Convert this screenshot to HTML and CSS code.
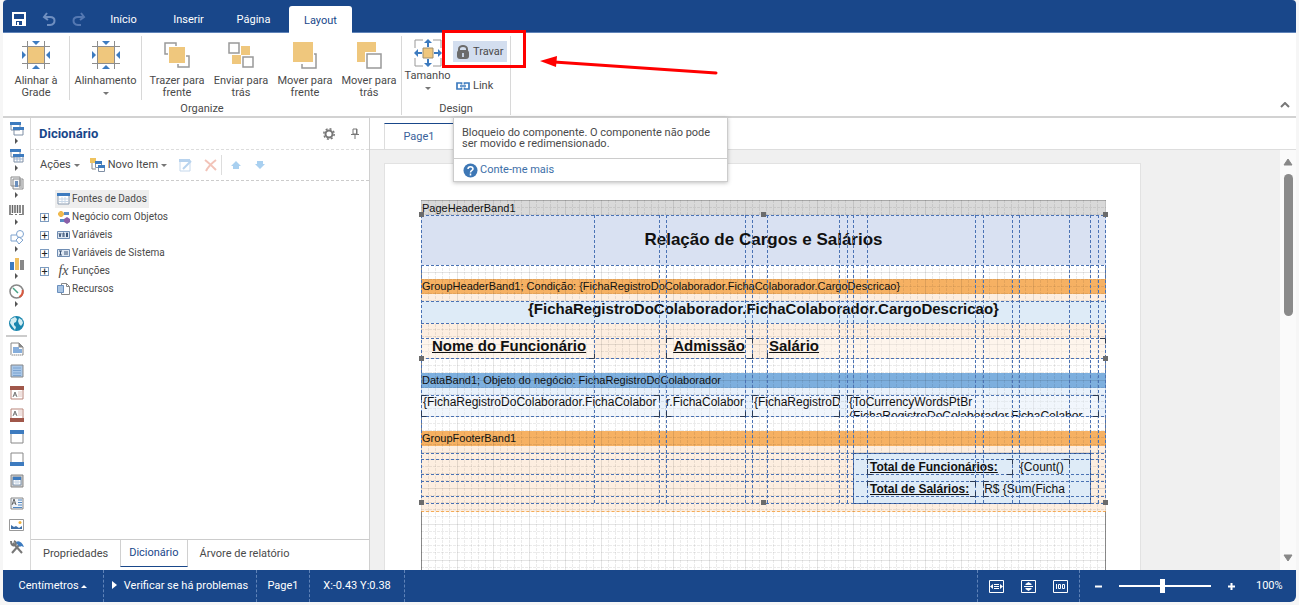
FILE: index.html
```html
<!DOCTYPE html>
<html lang="pt-br">
<head>
    <meta charset="UTF-8" />
    <title>Designer de Relatórios</title>
    <link rel="stylesheet" href="styles.css">
</head>
<body>
<div class="app">

    <!-- barra superior -->
    <header class="topbar">
        <button class="quick" aria-label="Salvar"><svg width="14" height="14" viewBox="0 0 14 14"><path d="M1 1h12v12H1z" fill="none" stroke="#fff" stroke-width="2"/><path d="M1 7h12v6H1z" fill="#fff"/><path d="M4 9h6v4H4z" fill="#19478a"/><path d="M5 10h2v3H5z" fill="#fff"/></svg></button>
        <button class="quick off" aria-label="Desfazer"><svg width="14" height="14" viewBox="0 0 14 14"><path d="M5 1L2 5l4 3M2 5h6c6 0 6 7 0 8H5" fill="none" stroke="#6f8fc0" stroke-width="2"/></svg></button>
        <button class="quick off last" aria-label="Refazer"><svg width="14" height="14" viewBox="0 0 14 14"><path d="M9 1l3 4-4 3M12 5H6c-6 0-6 7 0 8h3" fill="none" stroke="#5478b2" stroke-width="2"/></svg></button>
        <nav class="menu">
            <button>Início</button>
            <button>Inserir</button>
            <button>Página</button>
            <button class="active">Layout</button>
        </nav>
    </header>

    <!-- ribbon -->
    <div class="ribbon">
        <section class="group">
            <div class="tools">
                <button class="tool w-first">
                    <svg width="28" height="28" viewBox="0 0 28 28"><use href="#ic-align"/></svg>
                    <span>Alinhar à<br>Grade</span>
                </button>
                <button class="tool w-align">
                    <svg width="28" height="28" viewBox="0 0 28 28"><use href="#ic-align"/></svg>
                    <span>Alinhamento</span><i class="caret"></i>
                </button>
                <button class="tool">
                    <svg width="28" height="28" viewBox="0 0 28 28"><path d="M2 2h11v11H2zM15 15h11v11H15z" fill="#fff" stroke="#999" stroke-width="1.500"/><path d="M5 5h18v18H5z" fill="#fff"/><path d="M6 6h16v16H6z" fill="#efc77d"/></svg>
                    <span>Trazer para<br>frente</span>
                </button>
                <button class="tool">
                    <svg width="28" height="28" viewBox="0 0 28 28"><path d="M5 5h18v18H5z" fill="#efc77d"/><path d="M1 1h13v13H1zM14 14h13v13H14z" fill="#fff"/><path d="M2 2h10v10H2zM16 16h10v10H16z" fill="#fff" stroke="#999" stroke-width="1.500"/></svg>
                    <span>Enviar para<br>trás</span>
                </button>
                <button class="tool">
                    <svg width="28" height="28" viewBox="0 0 28 28"><path d="M11 13h14v14H11z" fill="#fff" stroke="#999" stroke-width="1.500"/><path d="M0 0h23v23H0z" fill="#fff"/><path d="M2 1h20v20H2z" fill="#efc77d"/></svg>
                    <span>Mover para<br>frente</span>
                </button>
                <button class="tool">
                    <svg width="28" height="28" viewBox="0 0 28 28"><path d="M2 1h19v20H2z" fill="#efc77d"/><path d="M10 11h18v17H10z" fill="#fff"/><path d="M12 13h14v14H12z" fill="#fff" stroke="#999" stroke-width="1.500"/></svg>
                    <span>Mover para<br>trás</span>
                </button>
            </div>
            <h2>Organize</h2>
        </section>
        <section class="group design">
            <div class="tools">
                <button class="tool w-size">
                    <svg width="28" height="28" viewBox="0 0 28 28"><path d="M1 9V1h8M19 1h8v8M27 19v8h-8M9 27H1v-8" fill="none" stroke="#999"/><path d="M9 9h10v10H9z" fill="#efc77d" stroke="#a09070"/><path d="M13 8V4h-3l4-4 4 4h-3v4zM13 20v4h-3l4 4 4-4h-3v-4zM8 13H4v-3l-4 4 4 4v-3h4zM20 13h4v-3l4 4-4 4v-3h-4z" fill="#3d7bbf"/></svg>
                    <span>Tamanho</span><i class="caret"></i>
                </button>
                <div class="small-tools">
                    <button class="small-tool on" aria-describedby="tip">
                        <svg width="14" height="14" viewBox="0 0 14 14"><path d="M3 7V4a4 3 0 0 1 8 0v3" fill="none" stroke="#6b6b6b" stroke-width="2"/><rect x="1" y="5" width="12" height="9" rx="3" fill="#6b6b6b"/><path d="M6 8h2v4H6z" fill="#c5d0e0"/></svg>Travar</button>
                    <button class="small-tool">
                        <svg width="14" height="14" viewBox="0 0 14 14"><path d="M5.500 5.500V4H1v6h4.500V8.500M8.500 5.500V4H13v6H8.500V8.500M4 7h6" fill="none" stroke="#3d7bbf" stroke-width="1.700"/></svg>Link</button>
                    <div class="marker"></div>
                    <svg class="arrow" width="180" height="24" viewBox="0 0 180 24"><path d="M14 6L176 17" stroke="#f00" stroke-width="3" stroke-linecap="round"/><path d="M0 5L17 0L16 11z" fill="#f00"/></svg>
                    <div class="tooltip" id="tip" role="tooltip">
                        <p>Bloqueio do componente. O componente não pode ser movido e redimensionado.</p>
                        <a href="#"><svg width="15" height="15" viewBox="0 0 15 15"><circle cx="7.500" cy="7.500" r="7" fill="#3d77b5"/><path d="M5 6c0-3 5-3 5 0 0 1.500-2.500 1.500-2.500 3.500M7.500 10.500v2" fill="none" stroke="#fff" stroke-width="1.500"/></svg>Conte-me mais</a>
                    </div>
                </div>
            </div>
            <h2>Design</h2>
        </section>
        <button class="collapse" aria-label="Recolher"><svg width="10" height="6" viewBox="0 0 10 6"><path d="M1 5l4-4 4 4" fill="none" stroke="#777" stroke-width="2"/></svg></button>
    </div>

    <div class="workspace">
        <!-- caixa de ferramentas -->
        <aside class="toolbox">
            <button class="more" aria-label="Bandas"><svg width="14" height="14" viewBox="0 0 14 14"><path d="M1 1h9v7H1zM4 6h9v7H4z" fill="#fff" stroke="#7f8fa5"/><path d="M0 0h11v3H0zM3 5h11v3H3z" fill="#3d7bbf"/></svg></button>
            <button class="more" aria-label="Bandas cruzadas"><svg width="14" height="14" viewBox="0 0 14 14"><path d="M1 1h9v7H1zM4 6h9v7H4z" fill="#fff" stroke="#7f8fa5"/><path d="M0 0h11v3H0zM3 5h11v3H3z" fill="#3d7bbf"/><path d="M4 10h9M7 8v5M10 8v5" stroke="#9db3cf"/></svg></button>
            <button class="more" aria-label="Componentes"><svg width="14" height="14" viewBox="0 0 14 14"><path d="M1 1h9v9H1zM3 3h10v10H3z" fill="#f4f6f8" stroke="#8a8a8a"/><path d="M5 5h3v6H5z" fill="#6a8fbd"/><path d="M9 5h3M9 7h3M9 9h3M9 11h3" stroke="#888"/></svg></button>
            <button class="more" aria-label="Códigos de barras"><svg width="15" height="14" viewBox="0 0 15 14"><path d="M1 2v10M3.500 2v8M6 2v8M8.500 2v8M11 2v8M14 2v10" stroke="#666" stroke-width="1.500"/><path d="M2 11.500h2M6 11.500h2M10 11.500h3" stroke="#777"/></svg></button>
            <button class="more" aria-label="Formas"><svg width="14" height="14" viewBox="0 0 14 14"><path d="M1 5h7v6H1z" fill="#fff" stroke="#7ea3cf"/><circle cx="10" cy="4" r="3.500" fill="#fff" stroke="#7ea3cf"/><path d="M9 7l4 3-4 4-3-4z" fill="#fff" stroke="#7ea3cf"/></svg></button>
            <button class="more" aria-label="Gráfico"><svg width="14" height="14" viewBox="0 0 14 14"><path d="M0 5h4v8H0z" fill="#3d7bbf"/><path d="M5 1h4v12H5z" fill="#efbf5f"/><path d="M10 3h4v10h-4z" fill="#888"/></svg></button>
            <button class="more" aria-label="Medidor"><svg width="15" height="15" viewBox="0 0 15 15"><circle cx="7.500" cy="7.500" r="6.500" fill="#fff" stroke="#888" stroke-width="1.500"/><path d="M13.500 6a6.500 6.500 0 0 1-3 7" fill="none" stroke="#d9593f" stroke-width="2"/><path d="M4 4l5 5" stroke="#47a387" stroke-width="1.500"/></svg></button>
            <button class="globe" aria-label="Mapa"><svg width="15" height="15" viewBox="0 0 15 15"><circle cx="7.500" cy="7.500" r="7.500" fill="#1a86ae"/><path d="M2 3l4-2 2 2-1 3-2 1v2l2 2-1 3-3-4-2-3zM10 2l3 2 1 3-2 3-2-2-1-3z" fill="#d4edf2"/></svg></button>
            <hr>
            <button aria-label="Título do relatório"><svg width="14" height="14" viewBox="0 0 14 14"><path d="M1 1h8l4 4v8H1z" fill="#fff" stroke="#888"/><path d="M9 1v4h4" fill="#888" stroke="#888"/><path d="M3 5h6v2h3v4H3z" fill="#86aedc"/><path d="M1 13h12" stroke="#fff" stroke-dasharray="1 1"/></svg></button>
            <button aria-label="Dados"><svg width="14" height="14" viewBox="0 0 14 14"><path d="M1 1h12v12H1z" fill="#a9c7e8" stroke="#888"/><path d="M3 4h8M3 6.500h8M3 9h8M3 11.500h8" stroke="#7ba3d0"/></svg></button>
            <button aria-label="Cabeçalho do grupo"><svg width="14" height="14" viewBox="0 0 14 14"><path d="M1 1h12v12H1z" fill="#fff" stroke="#b9857b"/><path d="M0 0h14v4H0z" fill="#a0574a"/><path d="M3 11l2-5 2 5M4 9h2" fill="none" stroke="#777"/><path d="M8 6h4M8 8h4M8 10h4" stroke="#e0c4be"/></svg></button>
            <button aria-label="Rodapé do grupo"><svg width="14" height="14" viewBox="0 0 14 14"><path d="M1 1h12v12H1z" fill="#fff" stroke="#b9857b"/><path d="M0 10h14v4H0z" fill="#a0574a"/><path d="M3 8l2-5 2 5M4 6h2" fill="none" stroke="#777"/><path d="M8 3h4M8 5h4M8 7h4" stroke="#e0c4be"/></svg></button>
            <button aria-label="Cabeçalho"><svg width="14" height="14" viewBox="0 0 14 14"><path d="M1 1h12v12H1z" fill="#fff" stroke="#888"/><path d="M0 0h14v4H0z" fill="#3d7bbf"/></svg></button>
            <button aria-label="Rodapé"><svg width="14" height="14" viewBox="0 0 14 14"><path d="M1 1h12v12H1z" fill="#fff" stroke="#888"/><path d="M0 10h14v4H0z" fill="#3d7bbf"/></svg></button>
            <button aria-label="Painel"><svg width="14" height="14" viewBox="0 0 14 14"><path d="M1 1h12v12H1z" fill="#ccc" stroke="#888"/><path d="M3 3h8v8H3z" fill="#fff" stroke="#7d93ad"/><path d="M3 3h8v3H3z" fill="#3d7bbf"/><path d="M4 8h6M6 6v5M8 6v5" stroke="#c6d5e6"/></svg></button>
            <button aria-label="Texto"><svg width="14" height="14" viewBox="0 0 14 14"><path d="M1 2h12v11H1z" fill="#f0f4f9" stroke="#888"/><path d="M2 9l2-6 2 6M3 7h2" fill="none" stroke="#666"/><path d="M8 4h4M8 6.500h4M8 9h4M3 11.500h9" stroke="#4f86c2"/></svg></button>
            <button aria-label="Imagem"><svg width="15" height="14" viewBox="0 0 15 14"><path d="M.5 1.500h14v11H.5z" fill="#fff" stroke="#999"/><path d="M2 11V7l3 2 2-1 3 2 3-2v3z" fill="#3d6fa8"/><circle cx="11" cy="4.500" r="1.500" fill="#efb23f"/></svg></button>
            <button aria-label="Configurar"><svg width="14" height="14" viewBox="0 0 14 14"><path d="M3 3l9 10" stroke="#777" stroke-width="2"/><path d="M1 1c0 4 2 5 4 4s1-3-1-4" fill="none" stroke="#777" stroke-width="2"/><path d="M2 13l7-8" stroke="#777" stroke-width="2"/><path d="M6 2c3-2 6 0 8 5l-3-1-1 1-3-3z" fill="#3d7bbf"/></svg></button>
        </aside>

        <!-- dicionário -->
        <section class="panel">
            <div class="panel-head">
                <h1>Dicionário</h1>
                <button aria-label="Opções"><svg width="12" height="12" viewBox="0 0 12 12"><circle cx="6" cy="6" r="3.500" fill="none" stroke="#777" stroke-width="2"/><circle cx="6" cy="6" r="5.200" fill="none" stroke="#777" stroke-width="1.500" stroke-dasharray="2 2.080"/></svg></button>
                <button aria-label="Fixar"><svg width="8" height="12" viewBox="0 0 8 12"><path d="M2 1h4v5H2z" fill="#fff" stroke="#777"/><path d="M5.500 1v5M0 6.500h8M4 7v4" stroke="#777"/></svg></button>
            </div>
            <div class="panel-tools">
                <button class="actions">Ações <i class="caret"></i></button>
                <button class="new-item"><svg width="15" height="14" viewBox="0 0 15 14"><path d="M2 3v8h4" fill="none" stroke="#888"/><path d="M0 0h6v5H0z" fill="#efc35f"/><path d="M5.500 4.500h6v5h-6zM8.500 7.500h6v6h-6z" fill="#fff" stroke="#7f8fa5"/><path d="M5 3h7v3H5zM8 7h7v3H8z" fill="#3d7bbf"/></svg>Novo Item <i class="caret"></i></button>
                <button aria-label="Editar" disabled><svg width="13" height="13" viewBox="0 0 13 13"><path d="M1 1h10v11H1z" fill="#fff" stroke="#c5d8ec"/><path d="M0 0h11v3H0z" fill="#b8d3ee"/><path d="M4 10l8-8" stroke="#b8d3ee" stroke-width="2"/></svg></button>
                <button class="del" aria-label="Excluir" disabled><svg width="13" height="13" viewBox="0 0 13 13"><path d="M1 1c4 3 8 7 11 10M12 1C8 4 4 8 2 12" fill="none" stroke="#f2c3b8" stroke-width="2"/></svg></button>
                <button class="up" aria-label="Subir" disabled><svg width="10" height="8" viewBox="0 0 10 8"><path d="M5 0l5 5H8v3H2V5H0z" fill="#a9d0f0"/></svg></button>
                <button class="down" aria-label="Descer" disabled><svg width="10" height="8" viewBox="0 0 10 8"><path d="M5 8l5-5H8V0H2v3H0z" fill="#a9d0f0"/></svg></button>
            </div>
            <ul class="tree">
                <li><span class="leaf"></span><button class="selected"><svg width="13" height="14" viewBox="0 0 13 14"><path d="M1 2h11v10H1z" fill="#fff" stroke="#8a9bb0"/><path d="M0 1h13v3H0z" fill="#3d7bbf"/><path d="M2 7h9M2 9.500h9M5 5v6M8 5v6" stroke="#c9d8e8"/></svg>Fontes de Dados</button></li>
                <li><button class="exp" aria-label="Expandir">+</button><button><svg width="13" height="14" viewBox="0 0 13 14"><path d="M4 1v6M1 4h6M2 2l4 4M6 2L2 6" stroke="#efb94f" stroke-width="2"/><path d="M7 2h5v3H7zM3 9h4v3H3z" fill="#5a8cc4"/><path d="M7 9l3-2 3 2v3l-3 2-3-2z" fill="#8a5fa8"/></svg>Negócio com Objetos</button></li>
                <li><button class="exp" aria-label="Expandir">+</button><button><svg width="13" height="14" viewBox="0 0 13 14"><path d="M.5 3.500h12v7H.5z" fill="#dfe8f3" stroke="#6f8db3"/><path d="M2 5l1 4 1-4M6 9V5h1v4M9.500 9V5h1v4" fill="none" stroke="#3b5578"/></svg>Variáveis</button></li>
                <li><button class="exp" aria-label="Expandir">+</button><button><svg width="13" height="14" viewBox="0 0 13 14"><path d="M.5 3.500h12v7H.5z" fill="#dfe8f3" stroke="#6f8db3"/><path d="M2 5h3M3.500 5v4M2 9h3M7 6h4M7 8h4" stroke="#3b5578"/></svg>Variáveis de Sistema</button></li>
                <li><button class="exp" aria-label="Expandir">+</button><button><em class="fx">fx</em>Funções</button></li>
                <li><span class="leaf"></span><button><svg width="13" height="14" viewBox="0 0 13 14"><path d="M4.500 1.500h5l3 3v8h-8z" fill="#fff" stroke="#888"/><path d="M9.500 1.500v3h3" fill="none" stroke="#888"/><path d="M.5 3.500h6v7h-6z" fill="#a9c4e2" stroke="#6a8fbd"/></svg>Recursos</button></li>
            </ul>
            <div class="panel-tabs">
                <button>Propriedades</button>
                <button class="active">Dicionário</button>
                <button>Árvore de relatório</button>
            </div>
        </section>

        <!-- área de desenho -->
        <main class="designer">
            <div class="page-tabs"><button>Page1</button></div>
            <div class="scroll-area">
                <div class="sheet">
                    <div class="report">
                        <div class="band page-header">
                            <div class="label">PageHeaderBand1</div>
                            <div class="body"><div class="title">Relação de Cargos e Salários</div></div>
                        </div>
                        <div class="band group-header">
                            <div class="label">GroupHeaderBand1; Condição: {FichaRegistroDoColaborador.FichaColaborador.CargoDescricao}</div>
                            <div class="body">
                                <div class="group-name">{FichaRegistroDoColaborador.FichaColaborador.CargoDescricao}</div>
                                <div class="columns">
                                    <div class="cell c-nome">Nome do Funcionário</div>
                                    <div class="cell c-adm">Admissão</div>
                                    <div class="cell c-sal">Salário</div>
                                </div>
                            </div>
                        </div>
                        <div class="band data">
                            <div class="label">DataBand1; Objeto do negócio: FichaRegistroDoColaborador</div>
                            <div class="body">
                                <div class="cell d-nome">{FichaRegistroDoColaborador.FichaColabor</div>
                                <div class="cell d-adm">r.FichaColabor</div>
                                <div class="cell d-sal">{FichaRegistroD</div>
                                <div class="cell d-ext">{ToCurrencyWordsPtBr<br>(FichaRegistroDoColaborador.FichaColabor</div>
                            </div>
                        </div>
                        <div class="band group-footer">
                            <div class="label">GroupFooterBand1</div>
                            <div class="body">
                                <div class="totals">
                                    <div class="total"><b>Total de Funcionários:</b><span class="count">{Count()</span></div>
                                    <div class="total"><b>Total de Salários:</b><span class="sum">R$ {Sum(Ficha</span></div>
                                </div>
                            </div>
                        </div>
                        <svg class="grid" aria-hidden="true">
                            <defs>
                                <pattern id="cells" width="36" height="36" patternUnits="userSpaceOnUse">
                                    <path d="M7.500 0v36M14.500 0v36M21.500 0v36M28.500 0v36M0 7.500h36M0 14.500h36M0 21.500h36M0 28.500h36" stroke="#000" stroke-opacity=".08" stroke-dasharray="3 1"/>
                                    <path d="M.5 0v36M0 .5h36" stroke="#000" stroke-opacity=".1"/>
                                </pattern>
                            </defs>
                            <rect width="100%" height="100%" fill="url(#cells)"/>
                        </svg>
                        <svg class="guides" width="691" height="312" viewBox="-3 0 691 312" aria-hidden="true">
                            <path class="guide" d="M.5 15v289M173.500 15v289M238.500 15v289M245.500 15v289M324.500 15v289M331.500 15v289M346.500 15v289M418.500 15v289M426.500 15v289M432.500 15v289M446.500 15v289M554.500 15v289M562.500 15v289M591.500 15v289M598.500 15v289M648.500 15v289M669.500 15v289M677.500 15v289M684.500 15v289"/>
                            <path class="guide" d="M0 15.500h685M0 65.500h685M0 101.500h685M0 123.500h685M0 138.500h685M0 158.500h685M0 195.500h685M0 216.500h685M0 253.500h685M0 259.500h685M0 274.500h685M0 281.500h685M0 296.500h685M0 303.500h685"/>
                            <path class="corner" d="M168 158.500h5.500v-5M245.500 143v-4.500h5M326 138.500h5.500v5M245.500 153v5.500h5M326 158.500h5.500v-5M346.500 153v5.500h5M679 138.500h5.500v5M.5 200v-4.500h5M.5 211v5.500h5M233 195.500h5.500v5M233 216.500h5.500v-5M245.500 211v5.500h5M319 216.500h5.500v-5M331.500 200v-4.500h5M331.500 211v5.500h5M413 195.500h5.500v5M413 216.500h5.500v-5M426.500 200v-4.500h5M672 195.500h5.500v5M672 216.500h5.500v-5M446.500 264v-4.500h5M446.500 269v5.500h5M586 259.500h5.500v5M586 274.500h5.500v-5M643 259.500h5.500v5M446.500 286v-4.500h5M549 281.500h5.500v5M549 296.500h5.500v-5M562.500 286v-4.500h5M562.500 291v5.500h5"/>
                            <path class="handle" d="M-2 12h5v5h-5zM340 12h5v5h-5zM682 12h5v5h-5zM-2 156h5v5h-5zM682 156h5v5h-5zM-2 300h5v5h-5zM340 300h5v5h-5zM682 300h5v5h-5z"/>
                        </svg>
                    </div>
                </div>
                <div class="scrollbar">
                    <svg width="10" height="8" viewBox="0 0 10 8"><path d="M5 1l4 6H1z" fill="#888" stroke="#888" stroke-linejoin="round"/></svg>
                    <div class="thumb"></div>
                    <svg class="end" width="10" height="8" viewBox="0 0 10 8"><path d="M5 7l4-6H1z" fill="#888" stroke="#888" stroke-linejoin="round"/></svg>
                </div>
            </div>
        </main>
    </div>

    <!-- barra de status -->
    <footer class="statusbar">
        <button class="s-units">Centímetros <i class="caret up"></i></button>
        <button class="s-check"><i class="play"></i>Verificar se há problemas</button>
        <span class="s-page">Page1</span>
        <span class="s-pos">X:-0.43 Y:0.38</span>
        <div class="views">
            <button aria-label="Largura da página"><svg width="15" height="13" viewBox="0 0 15 13"><path d="M.5.5h14v12H.5z" fill="none" stroke="#fff"/><path d="M5 4.500h5M5 6.500h5M5 8.500h5" stroke="#fff"/><path d="M4 4L1 6.500 4 9zM11 4l3 2.500L11 9z" fill="#fff"/></svg></button>
            <button aria-label="Página inteira"><svg width="15" height="13" viewBox="0 0 15 13"><path d="M.5.5h14v12H.5z" fill="none" stroke="#fff"/><path d="M3 6.500h9" stroke="#fff"/><path d="M7.500 2l3 2v1h-6V4zM7.500 11l3-2V8h-6v1z" fill="#fff"/></svg></button>
            <button aria-label="Zoom 100%"><svg width="15" height="13" viewBox="0 0 15 13"><path d="M.5.5h14v12H.5z" fill="none" stroke="#fff"/><path d="M3.500 4v5M5.500 4.500h2v4h-2zM9.500 4.500h2v4h-2z" fill="none" stroke="#fff"/></svg></button>
        </div>
        <div class="zoom">
            <button aria-label="Diminuir"><svg width="9" height="9" viewBox="0 0 9 9"><path d="M1 4.500h7" stroke="#fff" stroke-width="2"/></svg></button>
            <input type="range" min="0" max="100" value="47" aria-label="Zoom">
            <button aria-label="Aumentar"><svg width="9" height="9" viewBox="0 0 9 9"><path d="M1 4.500h7M4.500 1v7" stroke="#fff" stroke-width="2"/></svg></button>
            <output>100%</output>
        </div>
    </footer>
</div>

<svg class="sprites" aria-hidden="true">
    <symbol id="ic-align" viewBox="0 0 28 28">
        <path d="M6 6h16v16H6z" fill="#efc77d"/>
        <path d="M5.500 0v28M22.500 0v28M0 5.500h28M0 22.500h28" stroke="#8c8c8c"/>
        <path d="M10 0h8l-4 4zM10 28h8l-4-4zM0 10v8l4-4zM28 10v8l-4-4z" fill="#3d7bbf"/>
    </symbol>
</svg>
</body>
</html>
```
FILE: styles.css
```css
*{
    box-sizing:border-box;
}
body{
    margin:0;
    background:#f6f6f6;
    color:#4a4a4a;
    font-family:Roboto, sans-serif;
    font-size:11px;
    line-height:12px;
}
button{
    border:0;
    padding:0;
    background:none;
    color:inherit;
    font:inherit;
    white-space:nowrap;
}
h1, h2, p, ul{
    margin:0;
    padding:0;
}
svg{
    display:block;
    flex:none;
}
.sprites{
    position:absolute;
    width:0;
    height:0;
}
.app{
    display:flex;
    flex-direction:column;
    height:100vh;
    padding:0 3px 3px;
}
.caret{
    display:inline-block;
    border:3px solid transparent;
    border-top-color:#777;
    border-bottom:0;
}
.caret.up{
    border-top:0;
    border-bottom:3px solid #fff;
    vertical-align:middle;
}

/* barra superior */
.topbar{
    display:flex;
    align-items:center;
    height:33px;
    flex:none;
    padding:6px 0 0 9px;
    background:#19478a;
    border-bottom:1px solid #5f83b8;
    border-radius:4px 4px 0 0;
    color:#fff;
}
.quick{
    display:flex;
    width:30px;
}
.quick.last{
    width:19px;
}
.menu{
    display:flex;
    align-self:stretch;
}
.menu button{
    width:65px;
    padding-top:2px;
}
.menu .active{
    width:63px;
    margin:0 0 -1px 3px;
    background:#fff;
    border-radius:3px 3px 0 0;
    color:#19478a;
}

/* ribbon */
.ribbon{
    display:flex;
    flex:none;
    height:85px;
    background:#fff;
    border-bottom:2px solid #d2d2d2;
}
.group{
    position:relative;
    display:flex;
    flex-direction:column;
    margin:3px 0 1px;
    border-right:1px solid #d8d8d8;
}
.group h2{
    font-size:11px;
    font-weight:normal;
    text-align:center;
}
.tools{
    display:flex;
    height:67px;
    margin-bottom:2px;
}
.tool{
    display:flex;
    flex-direction:column;
    align-items:center;
    width:64px;
    height:64px;
    padding-top:5px;
}
.tool span{
    margin-top:6px;
}
.tool .caret{
    margin-top:5px;
}
.w-first{
    width:67px;
    border-right:1px solid #d8d8d8;
}
.w-align{
    width:72px;
    margin-right:3px;
    border-right:1px solid #d8d8d8;
}
.w-size{
    width:51px;
    padding-top:3px;
}
.w-size span{
    margin-top:3px;
}
.small-tools{
    position:relative;
    display:flex;
    flex-direction:column;
    gap:13px;
    width:57px;
    padding-top:5px;
}
.small-tool{
    display:flex;
    align-items:center;
    gap:3px;
    width:54px;
    height:21px;
    padding-left:3px;
}
.small-tool.on{
    background:#d3deef;
}
.marker{
    position:absolute;
    top:-6px;
    left:-11px;
    width:84px;
    height:38px;
    border:3px solid #f00;
}
.arrow{
    position:absolute;
    top:20px;
    left:87px;
}
.tooltip{
    position:absolute;
    z-index:5;
    top:81px;
    left:0;
    width:275px;
    background:#fff;
    border:1px solid #ccc;
    box-shadow:0 1px 4px rgba(0,0,0,.25);
}
.tooltip p{
    height:40px;
    padding:9px 8px 0;
    line-height:11px;
}
.tooltip a{
    display:flex;
    align-items:center;
    gap:2px;
    height:23px;
    padding-left:9px;
    border-top:1px solid #ccc;
    color:#3d6fa8;
    text-decoration:none;
}
.collapse{
    align-self:flex-end;
    margin:0 6px 8px auto;
}

.workspace{
    display:flex;
    flex:1;
    min-height:0;
    background:#fff;
}

/* caixa de ferramentas */
.toolbox{
    display:flex;
    flex-direction:column;
    align-items:center;
    flex:none;
    width:28px;
    padding-top:4px;
    border-right:1px solid #d8d8d8;
    overflow:hidden;
}
.toolbox button{
    display:flex;
    flex-direction:column;
    align-items:center;
    flex:none;
    height:22px;
}
.toolbox .more{
    height:27px;
}
.more::after{
    content:"";
    margin-top:2px;
    border:3px solid transparent;
    border-left-color:#555;
    border-right:0;
}
.toolbox .globe{
    margin-top:5px;
}
.toolbox hr{
    flex:none;
    width:21px;
    height:2px;
    margin:-3px 0 5px;
    border:0;
    background:#ccc;
}

/* dicionario */
.panel{
    display:flex;
    flex-direction:column;
    flex:none;
    width:339px;
    border-right:1px solid #d0d0d0;
}
.panel-head{
    display:flex;
    align-items:center;
    gap:16px;
    height:32px;
    padding:0 10px 0 8px;
    border-bottom:1px dashed #ddd;
}
.panel-head h1{
    margin-right:auto;
    color:#19478a;
    font-size:13px;
}
.panel-tools{
    display:flex;
    align-items:center;
    height:31px;
    padding-left:9px;
    border-bottom:1px dashed #ccc;
}
.panel-tools button{
    display:flex;
    align-items:center;
    gap:3px;
    margin-right:12px;
}
.panel-tools .actions{
    margin-right:10px;
}
.panel-tools .del{
    height:20px;
    margin-right:9px;
    padding-right:4px;
    border-right:1px solid #ddd;
}
.panel-tools .up{
    margin-right:14px;
}
.tree{
    flex:1;
    padding:9px 0 0 9px;
    font-size:10px;
    list-style:none;
}
.tree li{
    display:flex;
    align-items:center;
    height:18px;
}
.tree li button{
    display:flex;
    align-items:center;
    gap:2px;
    height:18px;
    padding:0 2px;
}
.tree li .selected{
    background:#eee;
}
.tree li .exp{
    justify-content:center;
    width:9px;
    height:9px;
    margin-right:6px;
    padding:0;
    border:1px solid #7d9cc0;
    color:#222;
    font-size:11px;
    line-height:7px;
}
.leaf{
    width:15px;
}
.fx{
    width:13px;
    font-family:"Liberation Serif", serif;
    font-size:14px;
}
.panel-tabs{
    display:flex;
    height:31px;
    padding-bottom:3px;
    border-top:1px solid #ccc;
}
.panel-tabs button{
    padding:0 12px;
}
.panel-tabs .active{
    padding:0 8px;
    border:solid #d0d0d0;
    border-width:0 1px 1px;
    border-bottom-color:#19478a;
    color:#19478a;
}

/* designer */
.designer{
    display:flex;
    flex-direction:column;
    flex:1;
    min-width:0;
}
.page-tabs{
    height:32px;
    padding:5px 0 0 14px;
    border-bottom:1px solid #ddd;
}
.page-tabs button{
    width:70px;
    height:26px;
    border:solid #ddd;
    border-width:1px;
    border-top-color:#19478a;
    border-bottom:0;
    color:#3a5f9a;
}
.scroll-area{
    display:flex;
    flex:1;
    min-height:0;
    padding-left:14px;
    background:#f0f0f0;
    overflow:hidden;
}
.sheet{
    flex:none;
    width:757px;
    margin-top:13px;
    padding:36px 35px 0 36px;
    background:#fff;
    border:1px solid #e2e2e2;
    border-bottom:0;
}
.scrollbar{
    display:flex;
    flex-direction:column;
    align-items:center;
    width:16px;
    margin-left:auto;
    padding:8px 0;
    background:#fafafa;
}
.thumb{
    width:9px;
    height:142px;
    margin-top:8px;
    border-radius:5px;
    background:#8a8a8a;
}
.scrollbar .end{
    margin-top:auto;
}

/* relatorio */
.report{
    position:relative;
    width:685px;
    height:100%;
    border:solid #999;
    border-width:0 1px;
    color:#111;
    font-family:"Liberation Sans", sans-serif;
    font-size:12px;
    line-height:14px;
}
.band{
    margin:0 -1px;
}
.band .label{
    height:15px;
    padding-left:1px;
    font-size:11px;
    line-height:15px;
}
.body{
    position:relative;
}
.cell{
    position:relative;
    z-index:2;
    overflow:hidden;
    white-space:nowrap;
}
.page-header .label{
    background:#d9d9d9;
    border-top:1px solid #bbb;
}
.page-header .body{
    height:64px;
}
.title{
    position:relative;
    z-index:2;
    height:50px;
    background:#d9e1f2;
    font-size:17px;
    font-weight:bold;
    line-height:50px;
    text-align:center;
}
.group-header .label, .group-footer .label{
    background:#f6b163;
}
.group-header .body{
    height:65px;
    margin-bottom:14px;
    padding-top:7px;
    background:#fdeee0;
}
.group-name{
    position:relative;
    z-index:2;
    height:22px;
    background:#deebf7;
    font-size:15px;
    font-weight:bold;
    line-height:16px;
    text-align:center;
}
.columns{
    display:flex;
    margin-top:15px;
}
.columns .cell{
    height:20px;
    background:rgba(255,255,255,.4);
    font-size:15px;
    font-weight:bold;
    line-height:16px;
    text-decoration:underline;
}
.c-nome{
    width:173px;
    padding-left:11px;
}
.c-adm{
    width:86px;
    margin:0 15px 0 72px;
    text-align:center;
}
.c-sal{
    flex:1;
    padding-left:2px;
}
.data .label{
    background:#7dafde;
}
.data .body{
    display:flex;
    height:28px;
    margin-bottom:15px;
    padding-top:7px;
    background:#e8f1fb;
}
.data .cell{
    height:21px;
    background:rgba(255,255,255,.4);
}
.d-nome{
    width:238px;
    padding-left:2px;
}
.d-adm{
    width:79px;
    margin:0 7px;
}
.d-sal{
    width:87px;
    padding-left:2px;
}
.d-ext{
    width:251px;
    margin-left:8px;
    padding-left:2px;
}
.group-footer .body{
    height:66px;
    padding:7px 0 0 432px;
    background:#fdeee0;
    border-bottom:1px dashed #f4ac58;
}
.totals{
    position:relative;
    z-index:2;
    width:238px;
    height:51px;
    padding:6px 0 0 14px;
    background:#deebf7;
    border:1px solid #2f4f87;
}
.total{
    display:flex;
    height:22px;
    padding-left:2px;
}
.total b{
    text-decoration:underline;
}
.total span{
    overflow:hidden;
}
.count{
    margin-left:22px;
}
.sum{
    margin-left:15px;
}
.grid{
    position:absolute;
    z-index:1;
    top:0;
    left:-1px;
    width:685px;
    height:100%;
}
.guides{
    position:absolute;
    z-index:3;
    top:0;
    left:-4px;
}
.guide{
    fill:none;
    stroke:#4a72b4;
    stroke-dasharray:3 2;
}
.corner{
    fill:none;
    stroke:#2a3a55;
}
.handle{
    fill:#6b6b6b;
}

/* barra de status */
.statusbar{
    display:flex;
    flex:none;
    height:32px;
    background:#19478a;
    border-radius:0 0 6px 6px;
    color:#fff;
    line-height:32px;
}
.statusbar > *{
    border-right:1px dashed #5f83b8;
}
.s-units{
    width:101px;
}
.s-check{
    width:153px;
}
.play{
    display:inline-block;
    margin-right:7px;
    border:4px solid transparent;
    border-left:5px solid #fff;
    border-right:0;
}
.s-page{
    width:53px;
    text-align:center;
}
.s-pos{
    width:95px;
    text-align:center;
}
.views{
    display:flex;
    align-items:center;
    gap:17px;
    width:103px;
    margin-left:auto;
    padding-left:11px;
    border-left:1px dashed #5f83b8;
}
.zoom{
    display:flex;
    align-items:center;
    width:216px;
    padding-left:14px;
    border:0;
}
.zoom input{
    appearance:none;
    width:92px;
    height:15px;
    margin:0 16px;
    background:linear-gradient(#fff,#fff) center / 100% 2px no-repeat;
}
.zoom input::-webkit-slider-thumb{
    appearance:none;
    width:5px;
    height:14px;
    background:#fff;
}
.zoom output{
    margin-left:20px;
}
```
